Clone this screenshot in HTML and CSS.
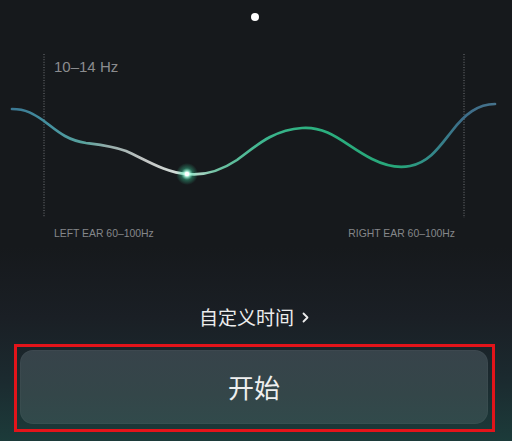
FILE: index.html
```html
<!DOCTYPE html>
<html lang="zh">
<head>
<meta charset="utf-8">
<title>Binaural</title>
<link rel="stylesheet" href="styles.css">
</head>
<body>
<div class="screen">
  <div class="pager"><span class="pager-dot"></span></div>
  <svg class="chart" width="512" height="216" viewBox="0 34 512 216" xmlns="http://www.w3.org/2000/svg">
    <defs>
      <linearGradient id="wave" gradientUnits="userSpaceOnUse" x1="12" y1="0" x2="496" y2="0">
        <stop offset="0" stop-color="#3b7893"/>
        <stop offset="0.08" stop-color="#4592a0"/>
        <stop offset="0.15" stop-color="#5aa39d"/>
        <stop offset="0.2" stop-color="#97adab"/>
        <stop offset="0.28" stop-color="#c4c6c5"/>
        <stop offset="0.36" stop-color="#d6e2dd"/>
        <stop offset="0.42" stop-color="#71c2a4"/>
        <stop offset="0.52" stop-color="#3db58e"/>
        <stop offset="0.62" stop-color="#2cb07f"/>
        <stop offset="0.8" stop-color="#27a67a"/>
        <stop offset="0.87" stop-color="#34878a"/>
        <stop offset="0.93" stop-color="#3c6c88"/>
        <stop offset="1" stop-color="#46738c"/>
      </linearGradient>
      <radialGradient id="glow">
        <stop offset="0" stop-color="#ffffff" stop-opacity="1"/>
        <stop offset="0.25" stop-color="#b8ffe6" stop-opacity="0.9"/>
        <stop offset="0.55" stop-color="#3fe0a8" stop-opacity="0.35"/>
        <stop offset="1" stop-color="#3fe0a8" stop-opacity="0"/>
      </radialGradient>
    </defs>
    <line class="guide" x1="44" y1="54" x2="44" y2="217"/>
    <line class="guide" x1="464" y1="54" x2="464" y2="218"/>
    <text class="hz" x="54" y="72">10–14 Hz</text>
    <path class="wave" d="M12,109 C26,109 34,114 44,121 C56,130 66,140 86,143 C102,145 112,146 126,151 C146,160 166,173 187,174 C205,176 222,170 237,160 C255,147 272,130 302,128 C330,126 346,146 372,159 C386,166 400,168 410,166 C430,162 440,146 452,131 C465,114 478,104 495,104"/>
    <circle cx="187" cy="174" r="11" fill="url(#glow)"/>
    <circle cx="187" cy="174" r="2.2" fill="#ffffff"/>
    <text class="ear" x="54" y="237">LEFT EAR 60–100Hz</text>
    <text class="ear" x="455" y="237" text-anchor="end">RIGHT EAR 60–100Hz</text>
  </svg>
  <div class="custom-time">自定义时间<svg class="chev" width="7" height="11" viewBox="0 0 7 11"><path d="M1.5,1.5 L5.5,5.5 L1.5,9.5" fill="none" stroke="#ececec" stroke-width="1.8" stroke-linecap="round" stroke-linejoin="round"/></svg></div>
  <div class="start-frame">
    <button class="start-btn">开始</button>
  </div>
</div>
</body>
</html>
```
FILE: styles.css
```css
html, body {
  margin: 0;
  padding: 0;
  background: #16191c;
}
.screen {
  width: 512px;
  height: 441px;
  overflow: hidden;
  display: flex;
  flex-direction: column;
  background: linear-gradient(to bottom, #16191c 0, #16191c 56%, #1a1f25 72%, #1b2a2f 86%, #1c3b3a 100%);
  font-family: "Noto Sans CJK SC", "Noto Sans", sans-serif;
}
.pager {
  height: 34px;
  box-sizing: border-box;
  padding-top: 13px;
  display: flex;
  justify-content: center;
}
.pager-dot {
  width: 8px;
  height: 8px;
  margin-left: -3px;
  border-radius: 50%;
  background: #ffffff;
}
.chart {
  display: block;
}
.guide {
  stroke: #8a8d90;
  stroke-width: 1;
  stroke-dasharray: 1 1.6;
  opacity: 0.8;
}
.wave {
  fill: none;
  stroke: url(#wave);
  stroke-width: 2.7;
  stroke-linecap: round;
}
.hz {
  font-family: "Liberation Sans", Arial, sans-serif;
  font-size: 15px;
  fill: #8b8c8e;
}
.ear {
  font-family: "Liberation Sans", Arial, sans-serif;
  font-size: 10.4px;
  fill: #85878a;
}
.custom-time {
  margin-top: 55px;
  height: 24px;
  line-height: 24px;
  font-size: 19px;
  color: #ececec;
  display: flex;
  align-items: center;
  justify-content: center;
  gap: 8px;
  padding-right: 4px;
}
.chev {
  display: block;
  margin-top: 1px;
}
.start-frame {
  margin-top: 15px;
  margin-left: 14px;
  width: 481px;
  height: 88px;
  box-sizing: border-box;
  border: 3px solid #e3141a;
  padding: 3px 4px 5px 3px;
  display: flex;
}
.start-btn {
  flex: 1;
  border: none;
  border-radius: 13px;
  background: linear-gradient(to bottom, #37434a 0%, #344649 60%, #314a4b 100%);
  box-shadow: inset 0 0 0 1px rgba(255, 255, 255, 0.03);
  color: #efefef;
  font-family: "Noto Sans CJK SC", "Noto Sans", sans-serif;
  font-size: 26px;
  line-height: 1;
  padding: 0;
  cursor: pointer;
}
```
